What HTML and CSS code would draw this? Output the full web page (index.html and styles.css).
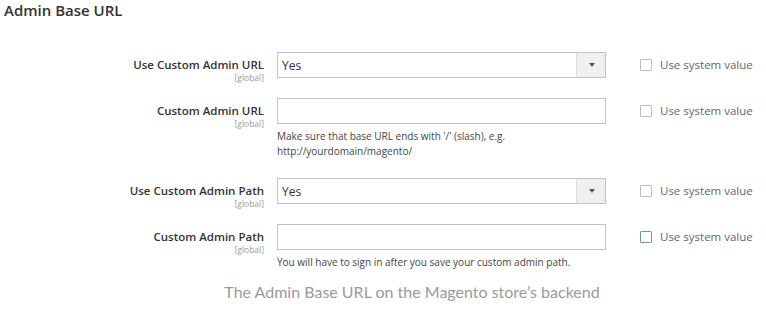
FILE: index.html
```html
<!DOCTYPE html>
<html>
<head>
    <meta charset="UTF-8">
    <meta name="viewport" content="width=device-width, initial-scale=1.0">
    <title>Admin Base URL</title>
    <link rel="stylesheet" href="styles.css">
</head>
<body>
    <div class="section">
        <h2 class="section-title">Admin Base URL</h2>

        <div class="config">
            <div class="row">
                <div class="label">
                    <span class="label-text">Use Custom Admin URL</span>
                    <span class="scope">[global]</span>
                </div>
                <div class="control">
                    <div class="select">
                        <span class="select-value">Yes</span>
                        <span class="select-arrow"></span>
                    </div>
                </div>
                <label class="system">
                    <span class="checkbox"></span>
                    <span>Use system value</span>
                </label>
            </div>

            <div class="row">
                <div class="label">
                    <span class="label-text">Custom Admin URL</span>
                    <span class="scope">[global]</span>
                </div>
                <div class="control">
                    <div class="input"></div>
                    <p class="note">Make sure that base URL ends with '/' (slash), e.g.<br>http://yourdomain/magento/</p>
                </div>
                <label class="system">
                    <span class="checkbox"></span>
                    <span>Use system value</span>
                </label>
            </div>

            <div class="row after-note">
                <div class="label">
                    <span class="label-text">Use Custom Admin Path</span>
                    <span class="scope">[global]</span>
                </div>
                <div class="control">
                    <div class="select">
                        <span class="select-value">Yes</span>
                        <span class="select-arrow"></span>
                    </div>
                </div>
                <label class="system">
                    <span class="checkbox"></span>
                    <span>Use system value</span>
                </label>
            </div>

            <div class="row">
                <div class="label">
                    <span class="label-text">Custom Admin Path</span>
                    <span class="scope">[global]</span>
                </div>
                <div class="control">
                    <div class="input"></div>
                    <p class="note">You will have to sign in after you save your custom admin path.</p>
                </div>
                <label class="system">
                    <span class="checkbox focus"></span>
                    <span>Use system value</span>
                </label>
            </div>
        </div>
    </div>

    <p class="caption">The Admin Base URL on the Magento store’s backend</p>
</body>
</html>
```

FILE: styles.css
```css
body {
    margin: 0;
    background-color: #ffffff;
    font-family: "Open Sans", "Noto Sans", sans-serif;
    color: #333;
}

.section {
    padding: 0 4px;
}

.section-title {
    margin: 0;
    padding-top: 1px;
    font-size: 15px;
    font-weight: 600;
    line-height: 18px;
    color: #333;
}

.config {
    display: flex;
    flex-direction: column;
    gap: 15px;
    margin-top: 33px;
}

.row {
    display: grid;
    grid-template-columns: 260px 329px auto;
    column-gap: 13px;
    align-items: start;
}

.row.after-note {
    margin-top: 4px;
}

.label {
    display: flex;
    flex-direction: column;
    align-items: flex-end;
    padding-top: 5px;
}

.label-text {
    font-size: 11.5px;
    font-weight: 600;
    line-height: 16px;
    color: #333;
}

.scope {
    font-size: 8.5px;
    line-height: 10px;
    color: #999;
}

.select, .input {
    height: 26px;
    box-sizing: border-box;
    border: 1px solid #c2c2c2;
    background-color: #fff;
}

.select {
    display: flex;
    align-items: center;
}

.select-value {
    flex: 1;
    padding-left: 4px;
    font-size: 12px;
    color: #333;
}

.select-arrow {
    width: 28px;
    height: 100%;
    background-color: #f0f0f0;
    border-left: 1px solid #dcdcdc;
    position: relative;
}

.select-arrow::after {
    content: "";
    position: absolute;
    left: 12px;
    top: 10px;
    border-left: 3px solid transparent;
    border-right: 3px solid transparent;
    border-top: 4px solid #555;
}

.note {
    margin: 5px 0 0;
    font-size: 10px;
    line-height: 15px;
    color: #444;
}

.system {
    display: flex;
    align-items: center;
    gap: 8px;
    margin-left: 21px;
    padding-top: 5px;
    font-size: 11.5px;
    color: #666;
}

.checkbox {
    width: 12px;
    height: 12px;
    box-sizing: border-box;
    border: 1px solid #bdbdbd;
    border-radius: 1px;
}

.checkbox.focus {
    border-color: #6b9ab3;
}

.caption {
    margin: 12px 0 0;
    text-align: center;
    padding-left: 58px;
    font-family: "Lato", sans-serif;
    font-size: 16px;
    line-height: 20px;
    color: #9a9a9a;
}
```
